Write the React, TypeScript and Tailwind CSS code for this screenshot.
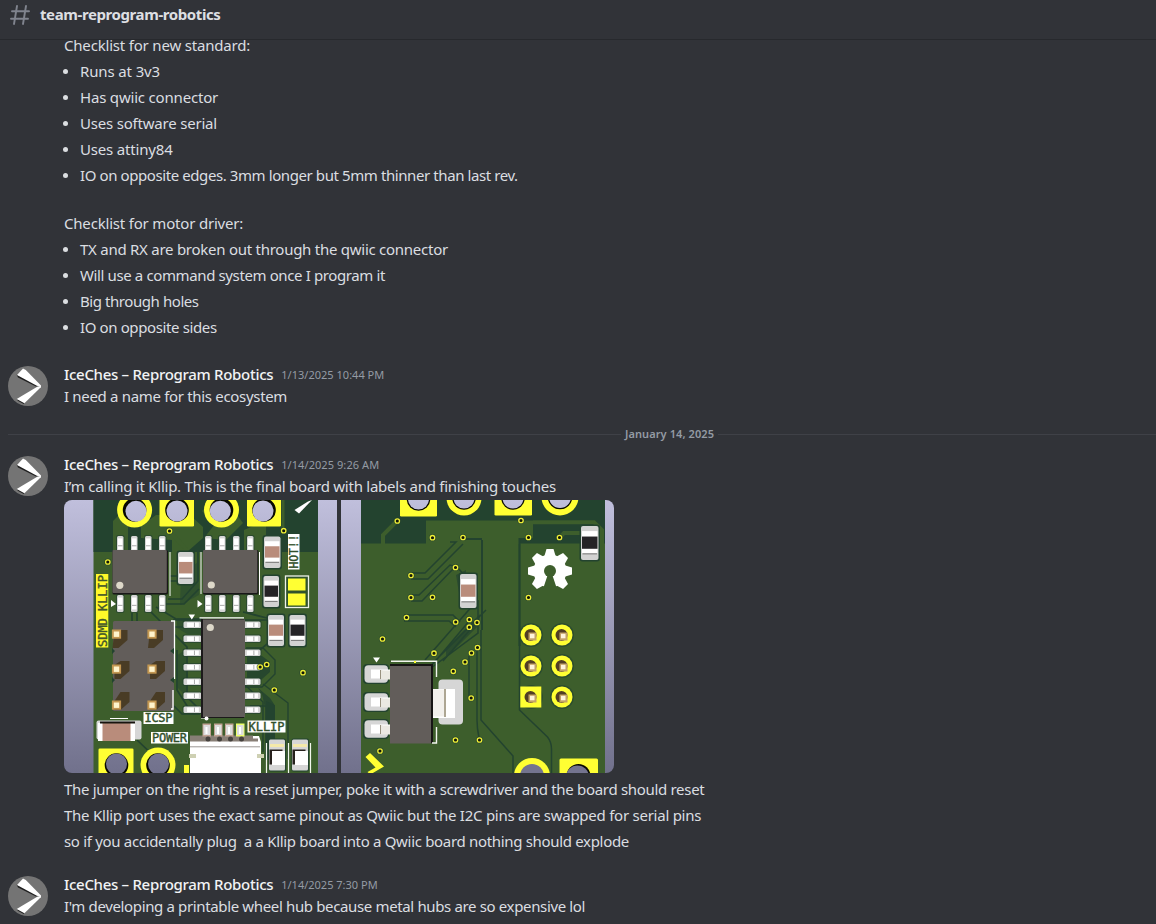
import type { ReactNode } from 'react';

type Pt = [number, number];

const GREEN = '#3d5e2c';
const DARK = '#23432f';
const YELLOW = '#ffff33';
const BROWN = '#b98c7b';

function Avatar() {
  return (
    <svg viewBox="0 0 40 40" className="mt-[3px] size-10 shrink-0">
      <circle cx="20" cy="20" r="20" fill="#747474" />
      <path d="M8.600 8.500 10 11.600 28 20.400 31 19.500Z" fill="#1f1f1f" />
      <path d="M8.800 33 9.800 34.800 15.600 38 17 36.200Z" fill="#1f1f1f" />
      <path d="M9 8.900 15 2.600 17.800 4 33 19.600V20.800L28.800 19.700Z" fill="#fff" />
      <path d="M8.700 33 28.800 20.900 33 19.800 32.800 21.200 16.400 37.200Z" fill="#fff" />
    </svg>
  );
}

function Ring({ x, y, dx = 0, dy = 0, r = 17.5, hole = 11.5 }: { x: number; y: number; dx?: number; dy?: number; r?: number; hole?: number }) {
  return (
    <g>
      <circle cx={x} cy={y} r={r} fill={YELLOW} />
      <circle cx={x} cy={y} r={hole + 0.3} fill="#080900" />
      <circle cx={x + dx} cy={y + dy} r={hole - 1} fill="url(#boardBg)" />
    </g>
  );
}

function SquarePad({ x, y, w, h, cx, cy, dy = 0, dx = 0 }: { x: number; y: number; w: number; h: number; cx: number; cy: number; dy?: number; dx?: number }) {
  return (
    <g>
      <rect x={x} y={y} width={w} height={h} rx="1.3" fill={YELLOW} />
      <circle cx={cx} cy={cy} r="11.8" fill="#080900" />
      <circle cx={cx + dx} cy={cy + dy} r="10.5" fill="url(#boardBg)" />
    </g>
  );
}

function Vias({ at }: { at: Pt[] }) {
  return (
    <g>
      {at.map(([x, y]) => (
        <g key={`${x}-${y}`}>
          <circle cx={x} cy={y} r="3.6" fill={DARK} opacity="0.7" />
          <circle cx={x} cy={y} r="2.2" fill="#111708" stroke="#eeee36" strokeWidth="1.3" />
        </g>
      ))}
    </g>
  );
}

function Lead({ x, y, w, h }: { x: number; y: number; w: number; h: number }) {
  const tall = h > w;
  return (
    <g>
      <rect x={x - 1} y={y - 1} width={w + 2} height={h + 2} rx="2" fill={DARK} opacity="0.7" />
      <rect x={x} y={y} width={w} height={h} rx="1.5" fill="#d5d5d5" />
      <rect x={x + (tall ? 1 : w * 0.2)} y={y + (tall ? h * 0.15 : 1)} width={tall ? w - 2 : w * 0.65} height={tall ? h * 0.7 : h - 2} fill="#fff" />
      <rect x={tall ? x + 1 : x + w * 0.58} y={tall ? y + h * 0.58 : y + 1} width={tall ? w - 2 : 1} height={tall ? 1 : h - 2} fill="#aaa" />
    </g>
  );
}

function Part({ x, y, w, h, color }: { x: number; y: number; w: number; h: number; color: string }) {
  return (
    <g>
      <rect x={x - 1.5} y={y - 1.5} width={w + 3} height={h + 3} rx="3" fill={DARK} />
      <rect x={x} y={y} width={w} height={h} rx="2" fill="#d2d2d2" />
      <rect x={x + 1} y={y + h * 0.15} width={w - 2} height={h * 0.65} fill="#fff" />
      <rect x={x + 1} y={y + h * 0.31} width={w - 2} height={h * 0.36} fill={color} />
      <path d={`M${x + 1.5} ${y + h * 0.82}h${w - 3}`} stroke="#777" />
    </g>
  );
}

function Chip({ x, y, w, h }: { x: number; y: number; w: number; h: number }) {
  return (
    <g>
      <rect x={x} y={y} width={w} height={h} rx="1.5" fill="#191719" />
      <rect x={x} y={y} width={w - 1.2} height={h - 1.6} rx="1" fill="#625d5a" />
    </g>
  );
}

function Silk({ x, y, w, h, width, size = 12, children }: { x: number; y: number; w: number; h: number; width: number; size?: number; children: string }) {
  return (
    <g>
      <rect x={x} y={y} width={w} height={h} fill="#fff" />
      <text x={x + (w - width) / 2} y={y + h - 1.7} textLength={width} fontFamily="DejaVu Sans Mono, monospace" fontSize={size} fill="#31502b" stroke="#31502b" strokeWidth="0.4">
        {children}
      </text>
    </g>
  );
}

function Gradient() {
  return (
    <defs>
      <linearGradient id="boardBg" gradientUnits="userSpaceOnUse" x1="0" y1="500" x2="0" y2="773">
        <stop offset="0" stopColor="#c0bfdc" />
        <stop offset="1" stopColor="#71718c" />
      </linearGradient>
    </defs>
  );
}

function BoardFront() {
  return (
    <svg viewBox="64 500 273 273" className="size-[273px]" role="img">
      <Gradient />
      <rect x="64" y="500" width="273" height="273" fill="url(#boardBg)" />
      <rect x="93.5" y="500" width="224.5" height="273" fill={GREEN} />
      <rect x="93.5" y="500" width="224.5" height="52" fill={DARK} />
      <path d="M113 552V521L121 513H128V552ZM141 538V526L156 515H190L203 527V538L187 552H172V540ZM204 538 222 515H237L243 523 226 540ZM244 530 258 524H266V552H244Z" fill={GREEN} />
      <path d="M169 531 186 549V556" fill="none" stroke={GREEN} strokeWidth="4" />
      <path d="M283 500V532M203 512l13-12" fill="none" stroke={GREEN} strokeWidth="3" />

      <g fill="none" stroke={DARK} strokeWidth="1.7">
        <path d="M170 576h15M170 581h15M168 599h14l16-18V552M166 604h18l15-15M132 613v8M137 613v8M150 611l16 16h21M156 607l20 12h26M173 620h26" />
        <path d="M174 634l13 13v50l11 11M177 650v40l12 19h15M174 706l8 8h18M137 740l38 36M240 620h28l7 8M243 612l24 6M240 650h20l13-11v-8M250 706h16l8 8" />
        <path d="M246 648h17l12 12v14l-13 13h-18M244 684l19 18v50M263 684l25 19v56" strokeWidth="1.4" />
      </g>
      <path d="M247 656h15l8 6v10l-9 8-14-2ZM262 694l-4-6 12 10 4 6v56h-9v-52Z" fill={DARK} opacity="0.85" />
      <path d="M266 704v-3l9 4v53h-9Z" fill={DARK} />
      <path d="M177 618h25v16h-15l-10-6ZM176 656l12-8v50l-12-12ZM181 576l18-15v34l-19 10Z" fill={DARK} opacity="0.5" />

      <Ring x={134.6} y={510} dx={1.4} dy={1.3} />
      <SquarePad x={159.5} y={494} w={34.5} h={32.5} cx={177} cy={510} dy={1} />
      <Ring x={221.5} y={510} dx={-1.2} dy={1.2} />
      <SquarePad x={247} y={494} w={34} h={32.5} cx={264} cy={510} dx={-1} dy={1} />
      <path d="M294.5 510 308 501.5 312 500H312L299 513.500Z" fill="#fff" />

      {[117, 131, 145, 159, 205, 219, 233, 247].map((x) => (
        <g key={x}>
          <Lead x={x} y={536} w={6.5} h={16} />
          <Lead x={x} y={595} w={6.5} h={17} />
        </g>
      ))}
      <path d="M170 552v44M201 552v42M259.5 552v43" stroke="#fff" />
      <Chip x={112.5} y={550} w={55.5} h={44.5} />
      <Chip x={203} y={550} w={55.5} h={44.5} />
      <circle cx="119.8" cy="585.3" r="3.6" fill="#ddd8c9" />
      <circle cx="211.3" cy="585" r="3.6" fill="#ddd8c9" />

      <Part x={178} y={552} w={15.5} h={32} color={BROWN} />
      <Part x={264} y={536.5} w={16.5} h={31.5} color={BROWN} />
      <Part x={263.5} y={576} w={15.5} h={31} color="#242326" />
      <Part x={268} y={615} w={16} h={31} color={BROWN} />
      <Part x={289.5} y={615} w={16} h={31} color="#242326" />

      <rect x="285.5" y="576" width="23" height="31.5" fill="#31542c" stroke="#eef2e9" strokeWidth="1.3" />
      <rect x="288" y="578.5" width="17.5" height="12" fill={YELLOW} />
      <rect x="288" y="593.5" width="17.5" height="12" fill={YELLOW} />

      <rect x="288" y="534" width="11.5" height="35.5" fill="#fff" />
      <text transform="translate(297.800 568.500) rotate(-90)" textLength="34" fontFamily="DejaVu Sans Mono, monospace" fontSize="11.5" fill="#31502b" stroke="#31502b" strokeWidth="0.4">HOT!!</text>
      <rect x="96" y="574" width="12.3" height="73.5" fill="#fff929" />
      <text transform="translate(106.500 647) rotate(-90)" textLength="72" fontFamily="DejaVu Sans Mono, monospace" fontSize="12" fill="#44582b" stroke="#44582b" strokeWidth="0.4">SDMD KLLIP</text>

      <rect x="113" y="621" width="61" height="90" rx="1.5" fill="#625d5a" />
      <path d="M171 621h3.5v58M171 709h2V690" fill="none" stroke="#fff" strokeWidth="1.3" />
      <path d="m112 648 3 3-3 3Zm62 0-4 3 4 3Zm-62 29 3 3-3 3Zm62 0-4 3 4 3Z" fill={DARK} />
      {[634, 669, 705].map((y, row) =>
        [116.5, 152].map((x) => (
          <g key={`${x}-${y}`}>
            <path d={`M${x - 2} ${y - 4}l${row === 0 ? 4 : 6} ${row === 0 ? 0 : row === 1 ? -4 : -9}h9v10l-9 8h-6Z`} fill="#493c25" />
            <rect x={x - 4.6} y={y - 4.5} width="9.2" height="9.2" fill="#c39751" />
            <rect x={x - 2.7} y={y - 2.5} width="5.4" height="5.4" fill="#fff4cc" />
          </g>
        )),
      )}

      {[622, 636, 650, 664.5, 679, 693, 707].map((y) => (
        <g key={y}>
          <Lead x={183.5} y={y - 0.5} w={18} h={6.5} />
          <Lead x={243.5} y={y - 0.5} w={17} h={6.5} />
        </g>
      ))}
      <path d="M199.5 617.8h44.5M201 717.8h4" stroke="#fff" strokeWidth="1.2" />
      <rect x="201" y="619" width="43" height="99" fill="#1c1a1b" />
      <rect x="203" y="619.5" width="42" height="97.5" fill="#625d5a" />
      <circle cx="210.3" cy="627.5" r="3.6" fill="#ddd8c9" />
      <path d="m111 600 5 4-5 3ZM197.500 600l5 4-5 3.500ZM188.500 614.500h6.500l-3.200 5Z" fill="#fff" />
      <circle cx="206.500" cy="718.500" r="2" fill="#fff" />

      <rect x="96.500" y="720.500" width="45" height="19" rx="2" fill="#d6d6d6" />
      <path d="M110 718.500h18" stroke="#fff" />
      <rect x="98" y="723" width="37" height="18" fill="#fff" />
      <rect x="102.500" y="723" width="28" height="18" fill={BROWN} />
      <path d="M100 722.500h35" stroke="#17140e" strokeWidth="2" />
      <Silk x={143.500} y={712} w={30} h={12} width={28}>ICSP</Silk>
      <Silk x={151} y={732} w={37} h={11.500} width={35}>POWER</Silk>
      <Silk x={247.500} y={720.500} w={38} h={12} width={36}>KLLIP</Silk>

      <SquarePad x={98.500} y={748.500} w={35} h={30} cx={116.500} cy={765} dx={0} dy={-1} />
      <Ring x={158} y={765} dx={0.500} dy={-1} />

      <path d="M190 742v31h71v-31l-2-6H190Z" fill="#fff" />
      <path d="M190 735.500h16v3h52v3H190ZM205 735.500h48v3h-48Z" fill="#887f76" />
      <path d="M190 746.800h70" stroke="#9c9894" strokeWidth="1" />
      <path d="M189 754h7v4h-7ZM257 754h7v4h-7Z" fill="#ced0b3" />
      {[206.500, 218, 229, 240].map((x, i) => (
        <g key={x}>
          <rect x={x - 4} y={723.500} width="8.500" height="13" fill={i === 3 ? '#edff6c' : '#c2a394'} />
          <rect x={x - 3} y={725} width="6.500" height="10" fill="#ddd" />
          <path d={`M${x} 727v7`} stroke="#fff" strokeWidth="2" />
          <circle cx={x + 1.500} cy={739} r="2.500" fill="#45413d" />
        </g>
      ))}
      <path d="M266.500 743v30M288.500 743v30M310.500 743v30" stroke="#f2f7ed" strokeWidth="1.200" />
      {[269, 292].map((x) => (
        <g key={x}>
          <rect x={x - 0.500} y={738.500} width="17.500" height="33" rx="2" fill={DARK} />
          <rect x={x} y={739.500} width="16" height="31" rx="1.500" fill="#d6d6d6" />
          <path d={`M${x + 1} 745.500h14`} stroke="#f4e9aa" strokeWidth="3" />
          <rect x={x + 0.500} y={749.500} width="13" height="15" fill="#27211d" />
          <rect x={x + 3} y={751} width="13" height="14" fill="#fff" />
        </g>
      ))}
      <rect x="184" y="765" width="5" height="8" fill={YELLOW} />
      <Vias at={[[169.500, 531], [107.800, 562], [283.700, 530.700], [260.200, 667], [266.700, 664.500], [303, 672.700], [274.300, 690]]} />
    </svg>
  );
}

function Gear() {
  return (
    <g transform="translate(550 571)">
      {[-135, -90, -45, 0, 45, 135, 180].map((a) => (
        <path key={a} d="M12-6.500 22-3.500V3.500L12 6.500Z" transform={`rotate(${a})`} fill="#fff" />
      ))}
      <circle r="16.500" fill="#fff" />
      <path d="M-2 3-7 18H7L2 3Z" fill={GREEN} />
      <circle r="6" fill={GREEN} />
    </g>
  );
}

function BoardBack() {
  return (
    <svg viewBox="341 500 273 273" className="size-[273px]" role="img">
      <rect x="341" y="500" width="273" height="273" fill="url(#boardBg)" />
      <rect x="361" y="500" width="244" height="273" fill={GREEN} />
      <path d="M361 500H605V543.500H361Z" fill={DARK} />
      <path d="M426 520.500H533V538H519V544H426Z" fill={GREEN} />
      <path d="M397 521 383 535v12M560 537l4-4h27M533 522.300H594L602 530V546" fill="none" stroke={GREEN} strokeWidth="4" />
      <path d="M519.500 538v108M482 540v90M460 539h22" stroke={DARK} strokeWidth="2" fill="none" />

      <g fill="none" stroke={DARK} strokeWidth="1.500">
        <path d="M411 573h14l31-31h-6M411 579h17l35-35M411 595h8l31-30 7 2 11 12M411 601h11l31-32M404 615h49l7 7M404 621h45l7 6" />
        <path d="M481 630v90l32 36v17M478 600v33L431 668M474 604 425 660M486 610l-54 54M470 620l-37 44M475 624l-32 37M477 644v76q0 8 2 18M469 656v42M519.500 544v166l28 27q4 5 4 12v24" />
      </g>
      <path d="M480 614 446 648v10l33-33ZM456 575l10-5v15l-7 8Z" fill={DARK} opacity="0.700" />

      <SquarePad x={400} y={495} w={37} h={21.500} cx={418.500} cy={499} dy={0} />
      <Ring x={464} y={498} />
      <SquarePad x={494.500} y={495} w={37.500} h={20.500} cx={513} cy={498} dy={0} />
      <Ring x={560} y={497} r={18.500} hole={12} />
      <Part x={460} y={574} w={16.500} h={34} color={BROWN} />
      <Part x={581} y={526} w={17.500} h={34} color="#242326" />
      <Gear />

      {[674, 702, 729].map((y) => (
        <g key={y}>
          <rect x="363" y={y - 10} width="26" height="20" rx="4" fill={DARK} />
          <rect x="364.500" y={y - 8.800} width="23.500" height="17.500" rx="4" fill="#d6d6d6" />
          <rect x="371" y={y - 4.500} width="19" height="9" fill="#fff" />
          <path d={`M381 ${y - 4.500}v10h9v-9h-7Z`} fill="#ebe9e2" />
          <path d={`M380.500 ${y - 4}v9`} stroke="#98917f" />
        </g>
      ))}
      <rect x="438.500" y="679.500" width="24.500" height="45" rx="4" fill="#d6d6d6" />
      <rect x="432" y="689" width="23" height="29" fill="#fff" />
      <path d="M432 689.500h12v27h-12" fill="#f2f0ec" />
      <path d="M445 689v28" stroke="#92896f" strokeWidth="1.500" />
      <rect x="390" y="664" width="43" height="79" fill="#161414" />
      <rect x="390" y="666" width="41" height="77.500" fill="#625d5a" />
      <path d="M391 661.200h45.500V677M436.500 727v16H432" fill="none" stroke="#f3f6ef" strokeWidth="1.400" />
      <path d="M373 657.500h7l-3.500 5Z" fill="#fff" />
      <path d="M414 661h2v2h-2Z" fill={YELLOW} />

      {[635, 666, 697].map((y) =>
        [531, 562].map((x) => (
          <g key={`${x}-${y}`}>
            <circle cx={x} cy={y} r="12" fill={DARK} opacity="0.650" />
            {x === 531 && y === 697 ? <rect x="520.300" y="686.500" width="21" height="21" fill={YELLOW} /> : <circle cx={x} cy={y} r="10.500" fill={YELLOW} />}
            <circle cx={x - 0.500} cy={y} r="6" fill="#513e24" />
            <rect x={x - 2.500} y={y - 2.500} width="8" height="8" fill="#c3a268" />
            <rect x={x - 1} y={y - 1.200} width="4.500" height="4.500" fill="#fff4dc" />
          </g>
        )),
      )}
      <circle cx="532" cy="776" r="18" fill={YELLOW} />
      <circle cx="532" cy="776" r="12" fill="#74748f" />
      <rect x="559.500" y="758.500" width="38.500" height="20" rx="1.500" fill={YELLOW} />
      <circle cx="578.500" cy="776" r="12" fill="#080900" />
      <circle cx="577.500" cy="777" r="11.500" fill="#74748f" />
      <path d="m365.500 757 4.500-4 14 13.500-12 7h-3l-1.500-1.500 8-4.500Z" fill={YELLOW} />
      <Vias
        at={[
          [397.300, 521], [432.500, 537.700], [463, 537.500], [521, 520.500], [528.500, 537.500], [559.500, 537.500],
          [411, 575.500], [455.500, 567.500], [411, 597.500], [432.500, 597.300], [528.500, 597.500], [406.500, 617.500],
          [455.700, 622], [469.300, 619.500], [477, 622.500], [469.300, 627.200], [382.500, 639], [434, 653.200],
          [471.500, 653], [477.500, 647.500], [465, 662], [453.300, 671.300], [471.200, 698], [455.500, 740], [479.500, 740], [380, 751],
        ]}
      />
    </svg>
  );
}

function Message({ time, timeClass, children }: { time: string; timeClass: string; children: ReactNode }) {
  return (
    <article className="flex gap-4 pl-2">
      <Avatar />
      <div className="min-w-0">
        <header className="flex h-[22px] items-center gap-2">
          <h3 className="text-[15px] font-medium tracking-[-0.3px] text-[#f2f3f5]">IceChes – Reprogram Robotics</h3>
          <time className={timeClass}>{time}</time>
        </header>
        {children}
      </div>
    </article>
  );
}

const bullet =
  "relative before:absolute before:-left-[17px] before:top-[9px] before:size-[5px] before:rounded-full before:bg-[#dbdee1] before:content-['']";

export default function App() {
  return (
    <main className="flex h-[924px] w-full flex-col overflow-hidden bg-[#313338] font-['Noto_Sans','Open_Sans',sans-serif] text-[15px] leading-[22px] whitespace-pre text-[#dbdee1]">
      <header className="z-10 flex h-10 shrink-0 items-start gap-2.5 border-b border-[#27292d] bg-[#313338] pt-[3px] pl-2.5">
        <svg viewBox="0 0 20 20" className="mt-0.5 size-5" fill="none" stroke="#80848e" strokeWidth="1.900" strokeLinecap="round">
          <path d="M7 1 4 19M16 1 13 19M2 6.300h17M1 13.700H18" />
        </svg>
        <h1 className="text-[15px] font-bold tracking-[-0.4px] text-[#dddfe2]">team-reprogram-robotics</h1>
      </header>
      <div className="-mt-[6px] flex flex-col">
        <section className="flex flex-col gap-1 pl-16">
          <p className="tracking-[-0.19px]">Checklist for new standard:</p>
          <ul className="flex flex-col gap-1 pl-4">
            <li className={bullet}><span className="tracking-[-0.13px]">Runs at 3v3</span></li>
            <li className={bullet}><span className="tracking-[-0.19px]">Has qwiic connector</span></li>
            <li className={bullet}><span className="tracking-[-0.2px]">Uses software serial</span></li>
            <li className={bullet}><span className="tracking-[-0.18px]">Uses attiny84</span></li>
            <li className={bullet}><span className="tracking-[-0.41px]">IO on opposite edges. 3mm longer but 5mm thinner than last rev.</span></li>
          </ul>
          <p className="mt-[22px] tracking-[-0.19px]">Checklist for motor driver:</p>
          <ul className="flex flex-col gap-1 pl-4">
            <li className={bullet}><span className="tracking-[-0.26px]">TX and RX are broken out through the qwiic connector</span></li>
            <li className={bullet}><span className="tracking-[-0.38px]">Will use a command system once I program it</span></li>
            <li className={bullet}><span className="tracking-[-0.43px]">Big through holes</span></li>
            <li className={bullet}><span className="tracking-[-0.38px]">IO on opposite sides</span></li>
          </ul>
        </section>
        <div className="mt-[25px]">
          <Message time="1/13/2025 10:44 PM" timeClass="pt-0.5 text-[11px] tracking-[0.02px] text-[#949ba4]">
            <p className="tracking-[-0.32px]">I need a name for this ecosystem</p>
          </Message>
        </div>
        <div className="mt-4 mb-2 flex h-[22px] items-center gap-1 pl-2">
          <span className="h-px w-[613px] bg-[#3f4147]" />
          <span className="w-[89px] text-[11px] font-semibold tracking-[0.09px] text-[#949ba4]">January 14, 2025</span>
          <span className="h-px flex-1 bg-[#3f4147]" />
        </div>
        <Message time="1/14/2025 9:26 AM" timeClass="pt-0.5 text-[11px] tracking-[0.07px] text-[#949ba4]">
          <p className="tracking-[-0.25px]">I’m calling it Kllip. This is the final board with labels and finishing touches</p>
          <div className="mt-[3px] mb-[5px] flex w-[550px] gap-1 overflow-hidden rounded-lg">
            <BoardFront />
            <BoardBack />
          </div>
          <div className="flex flex-col gap-1">
            <p className="tracking-[-0.31px]">The jumper on the right is a reset jumper, poke it with a screwdriver and the board should reset</p>
            <p className="tracking-[-0.25px]">The Kllip port uses the exact same pinout as Qwiic but the I2C pins are swapped for serial pins</p>
            <p className="tracking-[-0.32px]">{'so if you accidentally plug  a a Kllip board into a Qwiic board nothing should explode'}</p>
          </div>
        </Message>
        <div className="mt-[21px]">
          <Message time="1/14/2025 7:30 PM" timeClass="pt-0.5 text-[11px] text-[#949ba4]">
            <p className="tracking-[-0.357px]">I'm developing a printable wheel hub because metal hubs are so expensive lol</p>
          </Message>
        </div>
      </div>
    </main>
  );
}
